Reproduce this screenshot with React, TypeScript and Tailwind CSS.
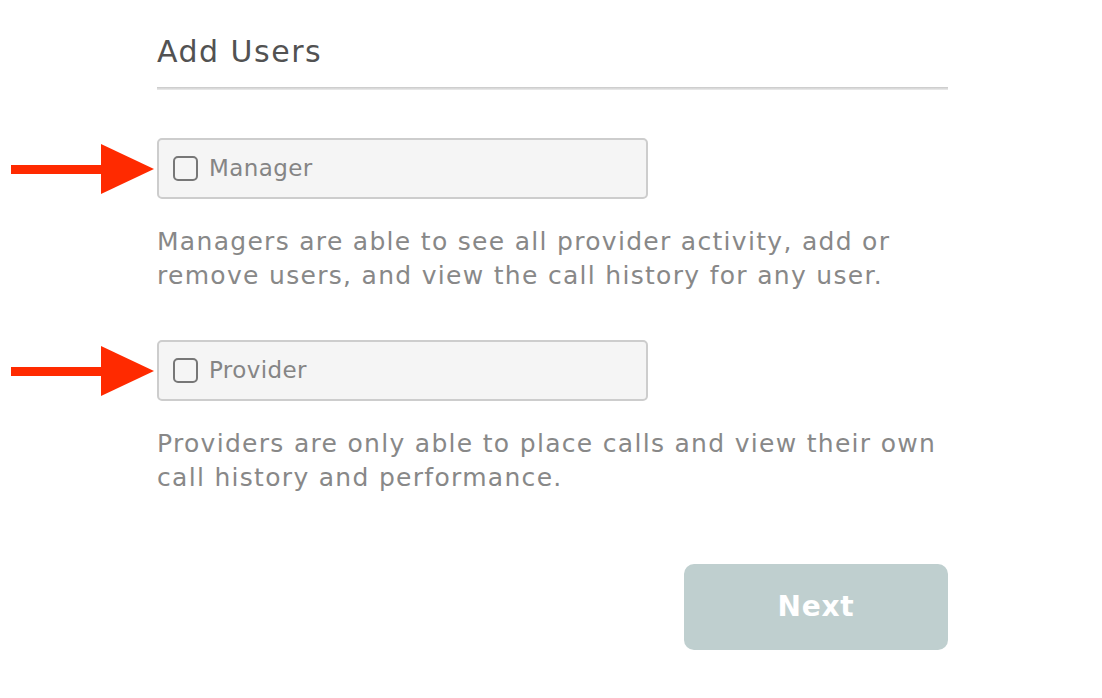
import React from 'react';

const font = { fontFamily: '"DejaVu Sans", "Open Sans", sans-serif' };

function Arrow() {
  return (
    <svg
      className="absolute right-full top-1/2 mr-[5px] -translate-y-1/2"
      width="143"
      height="50"
      viewBox="0 0 143 50"
    >
      <rect x="0" y="21" width="92" height="9" fill="#ff2a00" />
      <polygon points="90,0 143,25 90,50" fill="#ff2a00" />
    </svg>
  );
}

function RoleOption({ label, description }: { label: string; description: string }) {
  return (
    <div className="flex flex-col">
      <label className="relative flex h-[61px] w-[491px] cursor-pointer items-center gap-[11px] rounded-[5px] border-2 border-[#cdcdcd] bg-[#f5f5f5] pl-[14px]">
        <Arrow />
        <span className="h-[25px] w-[25px] rounded-[5px] border-2 border-[#777777]" />
        <span className="text-[23px] tracking-[0.4px] text-[#858585]">{label}</span>
      </label>
      <p className="mt-[26px] w-[790px] text-[25px] leading-[34px] tracking-[1.3px] text-[#888888]">
        {description}
      </p>
    </div>
  );
}

export default function App() {
  return (
    <div className="min-h-[698px] w-full bg-white" style={font}>
      <div className="ml-[157px] flex w-[791px] flex-col pt-[33px]">
        <h1 className="text-[30px] leading-[38px] tracking-[1.5px] text-[#525252]">Add Users</h1>
        <div className="mt-[16px] h-[3px] w-full bg-gradient-to-b from-[#c8c8c8] to-[#ececec]" />
        <div className="mt-[48px] flex flex-col gap-[47px]">
          <RoleOption
            label="Manager"
            description="Managers are able to see all provider activity, add or remove users, and view the call history for any user."
          />
          <RoleOption
            label="Provider"
            description="Providers are only able to place calls and view their own call history and performance."
          />
        </div>
        <div className="mt-[69px] flex justify-end">
          <button className="h-[86px] w-[264px] rounded-[10px] bg-[#bfcfcf] text-[28px] font-bold tracking-[0.8px] text-white">
            Next
          </button>
        </div>
      </div>
    </div>
  );
}
